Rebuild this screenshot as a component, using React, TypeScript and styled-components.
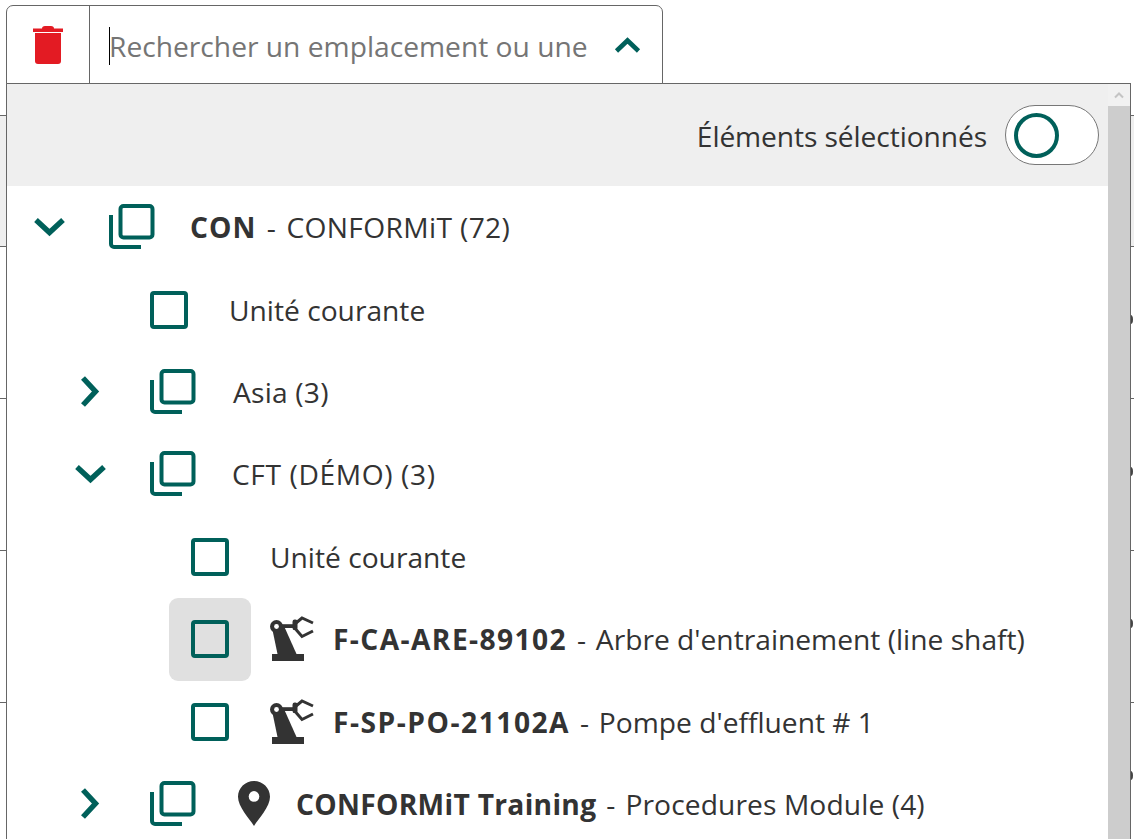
import React from "react";
import styled, { createGlobalStyle } from "styled-components";

const teal = "#00605a";
const ink = "#333333";

const GlobalStyle = createGlobalStyle`
  html, body {
    margin: 0;
    padding: 0;
    background: #fff;
    overflow: hidden;
  }
  body {
    font-family: "Open Sans", "Noto Sans", "Liberation Sans", sans-serif;
    color: ${ink};
  }
`;

const Page = styled.div`
  position: relative;
  width: 1134px;
  height: 839px;
  overflow: hidden;
`;

// table that sits behind the dropdown, only its edges show
const BackTable = styled.div`
  padding-top: 115px;
`;

const BackRow = styled.div<{ $height: number; $shaded?: boolean }>`
  position: relative;
  height: ${(p) => p.$height}px;
  border-top: 1px solid #666;
  box-sizing: border-box;
  background: ${(p) => (p.$shaded ? "#efefef" : "#fff")};
`;

const RowDot = styled.span`
  position: absolute;
  right: 1px;
  top: 68px;
  width: 5px;
  height: 9px;
  border-radius: 50%;
  background: #444;
`;

const SearchBox = styled.div`
  position: absolute;
  left: 6px;
  top: 5px;
  width: 657px;
  height: 79px;
  box-sizing: border-box;
  display: flex;
  background: #fff;
  border: 1px solid #666;
  border-radius: 7px 7px 0 0;
`;

const TrashCell = styled.div`
  width: 83px;
  display: flex;
  align-items: center;
  justify-content: center;
  border-right: 1px solid #666;
  padding-right: 1px;
  box-sizing: border-box;
`;

const InputCell = styled.div`
  flex: 1;
  display: flex;
  align-items: center;
  padding: 0 21px 0 19px;
  min-width: 0;
`;

const Caret = styled.span`
  width: 1px;
  height: 38px;
  margin-top: 3px;
  background: #000;
  flex: none;
`;

const Placeholder = styled.div`
  flex: 1;
  margin-left: -1px;
  margin-top: 3px;
  font-size: 28.2px;
  color: #757575;
  white-space: nowrap;
  overflow: hidden;
`;

const Dropdown = styled.div`
  position: absolute;
  left: 6px;
  top: 83px;
  width: 1125px;
  height: 780px;
  box-sizing: border-box;
  display: flex;
  background: #fff;
  border: 1px solid #666;
`;

const PanelBody = styled.div`
  flex: 1;
  min-width: 0;
`;

const ScrollBar = styled.div`
  width: 22px;
  flex: none;
  display: flex;
  flex-direction: column;
  background: #f1f1f1;
`;

const ScrollArrow = styled.div`
  height: 22px;
  display: flex;
  align-items: center;
  justify-content: center;
`;

const ScrollThumb = styled.div`
  flex: 1;
  background: #cdcdcd;
`;

const SelectedBar = styled.div`
  height: 102px;
  display: flex;
  align-items: center;
  justify-content: flex-end;
  gap: 18px;
  padding-right: 9px;
  background: #efefef;
`;

const SelectedLabel = styled.span`
  font-size: 28.2px;
  letter-spacing: -0.1px;
  margin-top: 1px;
`;

const Toggle = styled.div`
  width: 94px;
  height: 60px;
  box-sizing: border-box;
  display: flex;
  align-items: center;
  padding-left: 8px;
  background: #fff;
  border: 1px solid #777;
  border-radius: 30px;
`;

const Knob = styled.span`
  width: 45px;
  height: 45px;
  box-sizing: border-box;
  border: 4px solid ${teal};
  border-radius: 50%;
`;

const Tree = styled.div`
  display: flex;
  flex-direction: column;
`;

const Row = styled.div<{ $level: number }>`
  height: 82.4px;
  display: flex;
  align-items: center;
  padding-left: ${(p) => 20 + p.$level * 41}px;
  font-size: 28.2px;
  white-space: nowrap;
`;

const ChevronSlot = styled.div`
  width: 44px;
  height: 60px;
  display: flex;
  align-items: center;
  justify-content: center;
  flex: none;
  margin-right: 38px;
`;

const CheckSlot = styled.div<{ $hover?: boolean }>`
  width: 82px;
  height: 83px;
  display: flex;
  align-items: center;
  justify-content: center;
  flex: none;
  margin-left: 101px;
  margin-right: 19px;
  border-radius: 9px;
  background: ${(p) => (p.$hover ? "#e0e0e0" : "transparent")};
`;

const Check = styled.span`
  width: 38px;
  height: 38px;
  box-sizing: border-box;
  border: 4px solid ${teal};
  border-radius: 4px;
`;

const CopySlot = styled.svg`
  flex: none;
  width: 46px;
  height: 46px;
`;

const Label = styled.span<{ $gap: number; $track?: number }>`
  margin-left: ${(p) => p.$gap}px;
  letter-spacing: ${(p) => p.$track ?? 0}px;
`;

const Code = styled.b<{ $track: number }>`
  font-weight: 700;
  letter-spacing: ${(p) => p.$track}px;
`;

const Dash = styled.span`
  margin: 0 2.5px;
`;

const RobotSlot = styled.svg`
  flex: none;
  width: 45px;
  height: 46px;
`;

const PinSlot = styled.svg`
  flex: none;
  width: 32px;
  height: 45px;
  margin-left: 42px;
`;

const Chevron = ({ dir }: { dir: "up" | "down" | "right" }) => {
  if (dir === "up") {
    return (
      <svg width="27" height="16" viewBox="0 0 27 16">
        <polyline points="2.5,14 13.5,3.5 24.5,14" fill="none" stroke={teal} strokeWidth="4.6" />
      </svg>
    );
  }
  if (dir === "right") {
    return (
      <svg width="20" height="33" viewBox="0 0 20 33">
        <polyline points="3,3 15.5,16.5 3,30" fill="none" stroke={teal} strokeWidth="5.4" />
      </svg>
    );
  }
  return (
    <svg width="33" height="20" viewBox="0 0 33 20">
      <polyline points="3,3 16.5,15.5 30,3" fill="none" stroke={teal} strokeWidth="5.4" />
    </svg>
  );
};

const CopyIcon = () => (
  <CopySlot viewBox="0 0 46 46">
    <rect x="11.5" y="2" width="32" height="31.5" rx="3" fill="none" stroke={teal} strokeWidth="4" />
    <path d="M2 11v29a3 3 0 0 0 3 3h27" fill="none" stroke={teal} strokeWidth="4" />
  </CopySlot>
);

const RobotIcon = () => (
  <RobotSlot viewBox="0 0 45 46">
    <rect x="2" y="38" width="32" height="7" fill={ink} />
    <path d="M2.5 14L7.5 38h19L14 10z" fill={ink} />
    <circle cx="6.5" cy="10.5" r="6.5" fill={ink} />
    <circle cx="6.5" cy="10.5" r="2.4" fill="#fff" />
    <rect x="12" y="8.2" width="12" height="3.8" fill={ink} />
    <rect x="22.5" y="3.6" width="5" height="10.6" rx="2.2" fill={ink} />
    <path d="M26 7l6-5 11 5M26 13.5l6 7 11-5.5" fill="none" stroke={ink} strokeWidth="3" />
  </RobotSlot>
);

const PinIcon = () => (
  <PinSlot viewBox="0 0 32 45">
    <path
      d="M16 0C7.2 0 0 7 0 15.8 0 26 11 37 16 45c5-8 16-19 16-29.2C32 7 24.8 0 16 0z"
      fill={ink}
    />
    <circle cx="16" cy="15.4" r="5.3" fill="#fff" />
  </PinSlot>
);

const TrashIcon = () => (
  <svg width="30" height="38" viewBox="0 0 30 38">
    <path d="M9 2.5Q9 0 12 0h6q3 0 3 2.5H30V6H0V2.5z" fill="#e31b23" />
    <path d="M2 7h26v28a3 3 0 0 1-3 3H5a3 3 0 0 1-3-3z" fill="#e31b23" />
  </svg>
);

const ArrowUp = () => (
  <svg width="10" height="8" viewBox="0 0 10 8">
    <polyline points="1,6.5 5,2.5 9,6.5" fill="none" stroke="#c4c4c4" strokeWidth="2" />
  </svg>
);

export default function App() {
  return (
    <Page>
      <GlobalStyle />
      <BackTable>
        <BackRow $height={131} $shaded />
        {[0, 1, 2, 3].map((row) => (
          <BackRow key={row} $height={152}>
            <RowDot />
          </BackRow>
        ))}
      </BackTable>

      <Dropdown>
        <PanelBody>
          <SelectedBar>
            <SelectedLabel>Éléments sélectionnés</SelectedLabel>
            <Toggle>
              <Knob />
            </Toggle>
          </SelectedBar>
          <Tree>
            <Row $level={0}>
              <ChevronSlot>
                <Chevron dir="down" />
              </ChevronSlot>
              <CopyIcon />
              <Label $gap={35} $track={0.35}>
                <Code $track={1.1}>CON</Code> <Dash>-</Dash> CONFORMiT (72)
              </Label>
            </Row>
            <Row $level={0}>
              <CheckSlot>
                <Check />
              </CheckSlot>
              <Label $gap={0}>Unité courante</Label>
            </Row>
            <Row $level={1}>
              <ChevronSlot>
                <Chevron dir="right" />
              </ChevronSlot>
              <CopyIcon />
              <Label $gap={37} $track={0.2}>
                Asia (3)
              </Label>
            </Row>
            <Row $level={1}>
              <ChevronSlot>
                <Chevron dir="down" />
              </ChevronSlot>
              <CopyIcon />
              <Label $gap={36} $track={0.6}>
                CFT (DÉMO) (3)
              </Label>
            </Row>
            <Row $level={1}>
              <CheckSlot>
                <Check />
              </CheckSlot>
              <Label $gap={0}>Unité courante</Label>
            </Row>
            <Row $level={1}>
              <CheckSlot $hover>
                <Check />
              </CheckSlot>
              <RobotIcon />
              <Label $gap={18}>
                <Code $track={1.4}>F-CA-ARE-89102</Code> <Dash>-</Dash> Arbre d'entrainement (line shaft)
              </Label>
            </Row>
            <Row $level={1}>
              <CheckSlot>
                <Check />
              </CheckSlot>
              <RobotIcon />
              <Label $gap={18}>
                <Code $track={1.5}>F-SP-PO-21102A</Code> <Dash>-</Dash> Pompe d'effluent # 1
              </Label>
            </Row>
            <Row $level={1}>
              <ChevronSlot>
                <Chevron dir="right" />
              </ChevronSlot>
              <CopyIcon />
              <PinIcon />
              <Label $gap={26} $track={0.1}>
                <Code $track={0.3}>CONFORMiT Training</Code> <Dash>-</Dash> Procedures Module (4)
              </Label>
            </Row>
          </Tree>
        </PanelBody>
        <ScrollBar>
          <ScrollArrow>
            <ArrowUp />
          </ScrollArrow>
          <ScrollThumb />
        </ScrollBar>
      </Dropdown>

      <SearchBox>
        <TrashCell>
          <TrashIcon />
        </TrashCell>
        <InputCell>
          <Caret />
          <Placeholder>Rechercher un emplacement ou une</Placeholder>
          <Chevron dir="up" />
        </InputCell>
      </SearchBox>
    </Page>
  );
}
